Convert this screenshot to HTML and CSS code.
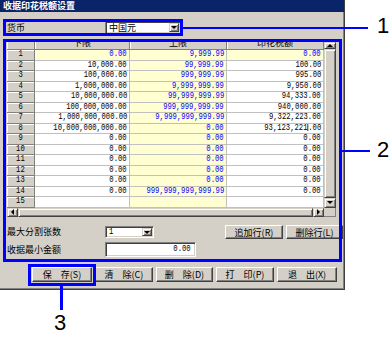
FILE: index.html
```html
<!DOCTYPE html>
<html lang="zh">
<head>
<meta charset="utf-8">
<title>收据印花税额设置</title>
<link rel="stylesheet" href="styles.css">
</head>
<body>
<div class="stage">
  <div class="window">
    <div class="titlebar">收据印花税额设置</div>
    <div class="content">
      <div class="currency-row">
        <span class="label">货币</span>
        <div class="field combo combo-currency">
          <span class="combo-text">中国元</span>
          <span class="arrow-btn"><i class="tri-down"></i></span>
        </div>
      </div>

      <div class="grid">
        <div class="grid-main">
          <div class="table">
            <div class="hc corner-h"></div>
            <div class="hc"><span class="htxt">下限</span></div>
            <div class="hc"><span class="htxt">上限</span></div>
            <div class="hc"><span class="htxt">印花税额</span></div>

            <div class="rh"><span class="n">1</span></div>
            <div class="c y b"><span class="n">0.00</span></div>
            <div class="c y b"><span class="n">9,999.99</span></div>
            <div class="c y b"><span class="n">0.00</span></div>

            <div class="rh"><span class="n">2</span></div>
            <div class="c"><span class="n">10,000.00</span></div>
            <div class="c y b"><span class="n">99,999.99</span></div>
            <div class="c"><span class="n">100.00</span></div>

            <div class="rh"><span class="n">3</span></div>
            <div class="c"><span class="n">100,000.00</span></div>
            <div class="c y b"><span class="n">999,999.99</span></div>
            <div class="c"><span class="n">995.00</span></div>

            <div class="rh"><span class="n">4</span></div>
            <div class="c"><span class="n">1,000,000.00</span></div>
            <div class="c y b"><span class="n">9,999,999.99</span></div>
            <div class="c"><span class="n">9,950.00</span></div>

            <div class="rh"><span class="n">5</span></div>
            <div class="c"><span class="n">10,000,000.00</span></div>
            <div class="c y b"><span class="n">99,999,999.99</span></div>
            <div class="c"><span class="n">94,333.00</span></div>

            <div class="rh"><span class="n">6</span></div>
            <div class="c"><span class="n">100,000,000.00</span></div>
            <div class="c y b"><span class="n">999,999,999.99</span></div>
            <div class="c"><span class="n">940,000.00</span></div>

            <div class="rh"><span class="n">7</span></div>
            <div class="c"><span class="n">1,000,000,000.00</span></div>
            <div class="c y b"><span class="n">9,999,999,999.99</span></div>
            <div class="c"><span class="n">9,322,223.00</span></div>

            <div class="rh"><span class="n">8</span></div>
            <div class="c"><span class="n">10,000,000,000.00</span></div>
            <div class="c y b"><span class="n">0.00</span></div>
            <div class="c"><span class="n">93,123,221<i class="caret"></i>.00</span></div>

            <div class="rh"><span class="n">9</span></div>
            <div class="c"><span class="n">0.00</span></div>
            <div class="c y b"><span class="n">0.00</span></div>
            <div class="c"><span class="n">0.00</span></div>

            <div class="rh"><span class="n">10</span></div>
            <div class="c"><span class="n">0.00</span></div>
            <div class="c y b"><span class="n">0.00</span></div>
            <div class="c"><span class="n">0.00</span></div>

            <div class="rh"><span class="n">11</span></div>
            <div class="c"><span class="n">0.00</span></div>
            <div class="c y b"><span class="n">0.00</span></div>
            <div class="c"><span class="n">0.00</span></div>

            <div class="rh"><span class="n">12</span></div>
            <div class="c"><span class="n">0.00</span></div>
            <div class="c y b"><span class="n">0.00</span></div>
            <div class="c"><span class="n">0.00</span></div>

            <div class="rh"><span class="n">13</span></div>
            <div class="c"><span class="n">0.00</span></div>
            <div class="c y b"><span class="n">0.00</span></div>
            <div class="c"><span class="n">0.00</span></div>

            <div class="rh"><span class="n">14</span></div>
            <div class="c"><span class="n">0.00</span></div>
            <div class="c y b"><span class="n">999,999,999,999.99</span></div>
            <div class="c"><span class="n">0.00</span></div>

            <div class="rh"><span class="n">15</span></div>
            <div class="c"></div>
            <div class="c y"></div>
            <div class="c"></div>
          </div>
          <div class="vscroll">
            <span class="arrow-btn sb-up"><i class="tri-up"></i></span>
            <span class="thumb"></span>
            <span class="arrow-btn sb-down"><i class="tri-down"></i></span>
          </div>
        </div>
        <div class="hrow">
          <div class="hscroll">
            <span class="arrow-btn sb-left"><i class="tri-left"></i></span>
            <span class="thumb"></span>
            <span class="arrow-btn sb-right"><i class="tri-right"></i></span>
          </div>
          <div class="sb-corner"></div>
        </div>
      </div>

      <div class="form-row">
        <span class="label">最大分割张数</span>
        <div class="field combo combo-count">
          <span class="combo-text"><span class="n">1</span></span>
          <span class="arrow-btn"><i class="tri-down"></i></span>
        </div>
        <button class="btn btn-add">追加行(R)</button>
        <button class="btn btn-del">删除行(L)</button>
      </div>

      <div class="form-row form-row2">
        <span class="label">收据最小金额</span>
        <div class="field input"><span class="n">0.00</span></div>
      </div>

      <div class="button-bar">
        <button class="btn w60">保　存(S)</button>
        <button class="btn w58">清　除(C)</button>
        <button class="btn w57">删　除(D)</button>
        <button class="btn w58">打　印(P)</button>
        <button class="btn w60">退　出(X)</button>
      </div>
    </div>
  </div>

  <div class="box box1"></div>
  <div class="line line1"></div>
  <div class="callout callout1">1</div>

  <div class="box box2"></div>
  <div class="line line2"></div>
  <div class="callout callout2">2</div>

  <div class="box box3"></div>
  <div class="line line3"></div>
  <div class="callout callout3">3</div>
</div>
</body>
</html>
```

FILE: styles.css
```css
* { box-sizing: border-box; margin: 0; padding: 0; }
html, body { background: #fff; }
body {
  width: 391px;
  height: 339px;
  overflow: hidden;
  font-family: "Noto Sans CJK SC", "Noto Sans", sans-serif;
  font-size: 9px;
  color: #000;
}
.stage { position: relative; width: 391px; height: 339px; }

.window {
  width: 345px;
  height: 290px;
  background: #d4d0c8;
  border-right: 1px solid #404040;
  border-bottom: 1px solid #404040;
  box-shadow: inset -1px -1px 0 #808080;
  display: flex;
  flex-direction: column;
}
.titlebar {
  height: 12px;
  background: #0a246a;
  color: #fff;
  font-weight: bold;
  font-size: 9px;
  line-height: 12px;
  padding-left: 3px;
  white-space: nowrap;
}
.content { padding-left: 7px; display: flex; flex-direction: column; }

.label { width: 98px; flex: none; line-height: 12px; white-space: nowrap; }

.currency-row { margin-top: 9px; height: 13px; display: flex; align-items: center; }

.field {
  background: #fff;
  border: 1px solid;
  border-color: #808080 #fff #fff #808080;
  box-shadow: inset 1px 1px 0 #404040, inset -1px -1px 0 #d4d0c8;
  display: flex;
  align-items: center;
  flex: none;
}
.combo { padding: 1px; }
.combo-text { flex: 1; padding-left: 2px; line-height: 11px; white-space: nowrap; display: flex; align-items: center; }
.combo-currency { width: 76px; height: 13px; }
.combo-count { width: 49px; height: 12px; }

.arrow-btn {
  display: flex;
  align-items: center;
  justify-content: center;
  background: #d4d0c8;
  border: 1px solid;
  border-color: #d4d0c8 #404040 #404040 #d4d0c8;
  box-shadow: inset 1px 1px 0 #fff, inset -1px -1px 0 #808080;
  flex: none;
}
.combo .arrow-btn { width: 10px; align-self: stretch; }

.tri-down, .tri-up, .tri-left, .tri-right { display: block; width: 0; height: 0; }
.tri-down { border-left: 3px solid transparent; border-right: 3px solid transparent; border-top: 3px solid #000; }
.tri-up { border-left: 3px solid transparent; border-right: 3px solid transparent; border-bottom: 3px solid #000; }
.tri-left { border-top: 3px solid transparent; border-bottom: 3px solid transparent; border-right: 3px solid #000; }
.tri-right { border-top: 3px solid transparent; border-bottom: 3px solid transparent; border-left: 3px solid #000; }

/* grid */
.grid { width: 329px; margin-top: 8px; display: flex; flex-direction: column; }
.grid-main { display: flex; height: 165.5px; }
.table {
  width: 317px;
  display: grid;
  grid-template-columns: 28px 95px 97px 97px;
  grid-template-rows: 8px repeat(15, 10.5px);
  background: #fff;
}
.hc {
  background: #d4d0c8;
  border-right: 1px solid #808080;
  border-bottom: 1px solid #808080;
  box-shadow: inset 1px 0 0 #fff;
  overflow: hidden;
  text-align: center;
}
.htxt { display: block; line-height: 12px; margin-top: -5px; white-space: nowrap; }
.rh {
  background: #d4d0c8;
  border-right: 1px solid #808080;
  border-bottom: 1px solid #808080;
  box-shadow: inset 1px 1px 0 #fff;
  display: flex;
  align-items: center;
  justify-content: center;
  overflow: hidden;
}
.rh .n { transform-origin: 50% 50%; }
.c {
  border-right: 1px solid #c0c0c0;
  border-bottom: 1px solid #c0c0c0;
  display: flex;
  align-items: center;
  justify-content: flex-end;
  padding-right: 2px;
  overflow: hidden;
  white-space: nowrap;
}
.y { background: #ffffd2; }
.b { color: #0000ff; }

.n {
  display: inline-block;
  font-family: "Liberation Mono", "DejaVu Sans Mono", monospace;
  font-size: 9px;
  line-height: 9px;
  white-space: nowrap;
  transform: scaleX(0.8);
  transform-origin: 100% 50%;
}
.combo-text .n { transform-origin: 0 50%; }
.caret { display: inline-block; width: 1px; height: 8px; background: #000; vertical-align: -1px; }

.vscroll { width: 12px; display: flex; flex-direction: column; background: #e9e7e2; }
.sb-up { height: 7px; }
.sb-down { height: 10px; }
.thumb {
  flex: 1;
  background: #d4d0c8;
  border: 1px solid;
  border-color: #d4d0c8 #404040 #404040 #d4d0c8;
  box-shadow: inset 1px 1px 0 #fff, inset -1px -1px 0 #808080;
}
.hrow { display: flex; height: 9.5px; }
.hscroll { width: 317px; display: flex; }
.sb-left, .sb-right { width: 11px; }
.sb-corner { width: 12px; background: #d4d0c8; border-right: 1px solid #808080; border-bottom: 1px solid #808080; }

/* form rows */
.form-row { display: flex; align-items: center; height: 14px; margin-top: 8px; padding-right: 1px; }
.form-row2 { height: 15px; margin-top: 3px; }
.input { width: 91px; height: 15px; justify-content: flex-end; padding-right: 4px; }

.btn {
  font-family: "Noto Sans CJK SC", "Noto Sans", sans-serif;
  font-size: 9px;
  line-height: 11px;
  color: #000;
  background: #d4d0c8;
  border: 1px solid;
  border-color: #fff #404040 #404040 #fff;
  box-shadow: inset -1px -1px 0 #808080;
  white-space: nowrap;
  flex: none;
  cursor: default;
}
.btn-add { width: 58px; height: 14px; margin-left: auto; }
.btn-del { width: 57px; height: 14px; margin-left: 3px; }

.button-bar { display: flex; gap: 3px; margin-top: 10px; padding-left: 25px; height: 15px; }
.button-bar .btn { height: 15px; }
.w60 { width: 60px; }
.w58 { width: 58px; }
.w57 { width: 57px; }

/* annotation overlays */
.box { position: absolute; border: 3px solid #0000ff; }
.box1 { left: 3px; top: 19px; width: 180px; height: 17px; }
.box2 { left: 3px; top: 39px; width: 339px; height: 223px; }
.box3 { left: 28px; top: 264px; width: 68px; height: 22px; }
.line { position: absolute; background: #0000ff; }
.line1 { left: 183px; top: 27px; width: 185px; height: 2px; }
.line2 { left: 342px; top: 150px; width: 28px; height: 2px; }
.line3 { left: 60px; top: 286px; width: 3px; height: 24px; }
.callout {
  position: absolute;
  font-family: "Liberation Sans", Arial, sans-serif;
  font-size: 22px;
  line-height: 22px;
  color: #000;
}
.callout1 { left: 377px; top: 15px; }
.callout2 { left: 377px; top: 139px; }
.callout3 { left: 54px; top: 312px; }
```
